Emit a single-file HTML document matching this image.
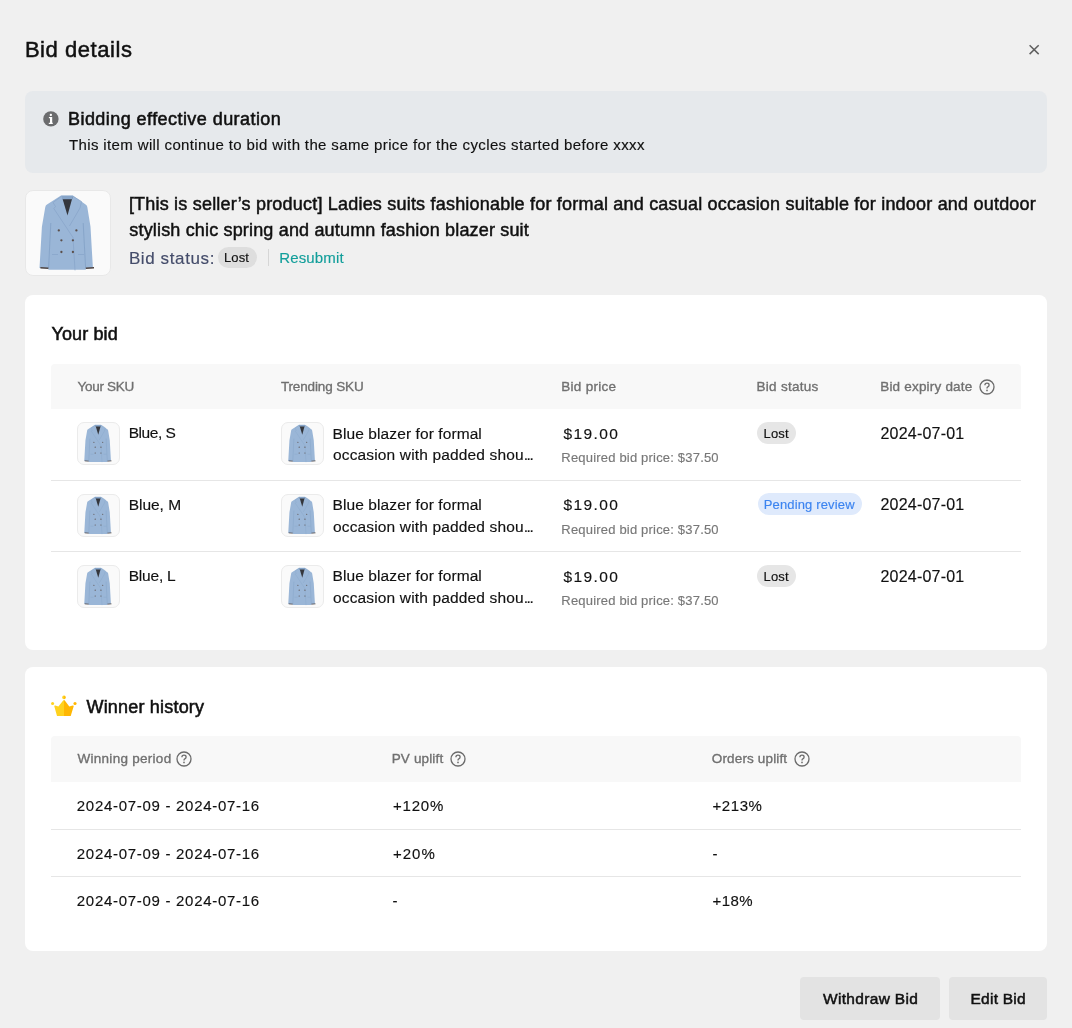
<!DOCTYPE html>
<html><head><meta charset="utf-8"><style>
html,body{margin:0;padding:0;width:1072px;height:1028px;overflow:hidden;background:#f0f0f0;font-family:"Liberation Sans", sans-serif;}
#root{position:relative;width:1072px;height:1028px;overflow:hidden;will-change:transform;}
.t{position:absolute;white-space:nowrap;}
.b{position:absolute;}
</style></head><body><div id="root">
<div class="t" style="left:24.90px;top:37.00px;font-size:22px;line-height:25px;color:#111111;letter-spacing:0.55px;-webkit-text-stroke:0.5px #111111;">Bid details</div>
<svg class="b" style="left:1026px;top:41px" width="16" height="17" viewBox="0 0 16 17"><path d="M3.6 4.2 L12.7 13.1 M12.7 4.2 L3.6 13.1" stroke="#606060" stroke-width="1.5" fill="none"/></svg>
<div class="b" style="left:25px;top:91px;width:1022px;height:82px;background:#e6e9ec;border-radius:8px"></div>
<svg class="b" style="left:43px;top:111px" width="16" height="16" viewBox="0 0 16 16"><circle cx="7.9" cy="7.9" r="7.7" fill="#6b6c6e"/><rect x="6.75" y="2.85" width="2.2" height="2.1" rx="0.8" fill="#fff"/><path d="M5.9 6 H9.2 V11.8 H9.8 V13.1 H5.8 V11.8 H7 V7.2 H5.9 Z" fill="#fff"/></svg>
<div class="t" style="left:68.00px;top:109.30px;font-size:18px;line-height:20px;color:#111111;letter-spacing:0.44px;-webkit-text-stroke:0.55px #111111;">Bidding effective duration</div>
<div class="t" style="left:69.00px;top:136.20px;font-size:15px;line-height:17px;color:#111111;letter-spacing:0.369px;-webkit-text-stroke:0.15px #111111;">This item will continue to bid with the same price for the cycles started before xxxx</div>
<svg width="0" height="0" style="position:absolute"><defs>
<symbol id="jk" viewBox="0 0 86 86">
<path d="M36 5.6 L47.8 5.6 L60.6 14.4 Q62 15.3 62.3 17 L65.5 36.7 L67.9 78 L60.9 78.4 L60.8 79.8 L23.4 79.8 L23.3 78.4 L14.5 78 L16.9 36.7 L20.3 17 Q20.6 15.3 22 14.4 Z" fill="#9ab6d7"/>
<path d="M25.8 33 L23.6 78 M58.2 33 L60.6 78" stroke="#85a3c7" stroke-width="0.9" fill="none"/>
<path d="M37 7 L47.6 7 L42.5 25.5 Z" fill="#34363c"/><path d="M36.4 5.8 L48.1 5.8 L47.4 9.2 L37.1 9.2 Z" fill="#86a4c8"/>
<path d="M36.4 6.4 L28 12.5 L30.5 16.5 L28.8 18.5 L48 47.5 M48.1 6.4 L56.5 11.5 L55 18 L44.5 36 M48 47.5 L50 80.4 M27 64.5 L33 64.5 M53 64.5 L59 64.5" stroke="#86a4c8" stroke-width="0.7" fill="none"/>
<path d="M15.4 77 L23.4 77.4 L23.4 79 L15.4 78.6 Z M60.8 77.4 L69 77 L69 78.6 L60.8 79 Z" fill="#4e4442"/>
<g fill="#5b4f4b"><circle cx="33.8" cy="40.4" r="1.15"/><circle cx="51.4" cy="40.4" r="1.15"/><circle cx="36.4" cy="50.3" r="1.15"/><circle cx="47.9" cy="50.3" r="1.15"/><circle cx="36.4" cy="62" r="1.15"/><circle cx="47.9" cy="62" r="1.15"/></g>
</symbol>
<symbol id="qm" viewBox="0 0 16 16"><circle cx="8" cy="8" r="7" fill="none" stroke="#6b6b6b" stroke-width="1.3"/><path d="M5.9 6.2 Q5.9 4.2 8 4.2 Q10.1 4.2 10.1 6 Q10.1 7.2 8.8 7.9 Q8 8.3 8 9.4" fill="none" stroke="#6b6b6b" stroke-width="1.3"/><circle cx="8" cy="11.4" r="0.85" fill="#6b6b6b"/></symbol>
</defs></svg>
<div class="b" style="left:25px;top:190px;width:86px;height:86px;background:#fafafa;border:1px solid #e8e8e8;border-radius:8px;box-sizing:border-box"></div>
<svg class="b" style="left:25px;top:190px" width="86" height="86"><use href="#jk"/></svg>
<div class="t" style="left:128.90px;top:194.00px;font-size:18px;line-height:20px;color:#111111;letter-spacing:0.204px;-webkit-text-stroke:0.5px #111111;">[This is seller’s product] Ladies suits fashionable for formal and casual occasion suitable for indoor and outdoor</div>
<div class="t" style="left:129.30px;top:219.90px;font-size:18px;line-height:20px;color:#111111;letter-spacing:0.169px;-webkit-text-stroke:0.5px #111111;">stylish chic spring and autumn fashion blazer suit</div>
<div class="t" style="left:128.90px;top:248.80px;font-size:17px;line-height:19px;color:#444c6a;letter-spacing:0.61px;-webkit-text-stroke:0.15px #444c6a;">Bid status:</div>
<div class="b" style="left:218px;top:247px;width:39px;height:21px;background:#dedede;border-radius:11px"></div>
<div class="t" style="left:223.90px;top:250.20px;font-size:13px;line-height:15px;color:#111111;letter-spacing:0.167px;-webkit-text-stroke:0.15px #111111;">Lost</div>
<div class="b" style="left:267.5px;top:249px;width:1px;height:17px;background:#d6d6d6"></div>
<div class="t" style="left:279.20px;top:248.90px;font-size:15px;line-height:17px;color:#129e9a;letter-spacing:0.157px;-webkit-text-stroke:0.15px #129e9a;">Resubmit</div>
<div class="b" style="left:25px;top:294.5px;width:1022px;height:355.5px;background:#fff;border-radius:8px"></div>
<div class="t" style="left:51.50px;top:324.00px;font-size:18px;line-height:20px;color:#111111;letter-spacing:0.114px;-webkit-text-stroke:0.55px #111111;">Your bid</div>
<div class="b" style="left:51px;top:364px;width:970px;height:45px;background:#f8f8f8;border-radius:4px 4px 0 0"></div>
<div class="t" style="left:77.50px;top:379.20px;font-size:13.5px;line-height:15px;color:#707070;letter-spacing:-0.3px;-webkit-text-stroke:0.35px #707070;">Your SKU</div>
<div class="t" style="left:280.90px;top:379.20px;font-size:13.5px;line-height:15px;color:#707070;letter-spacing:-0.136px;-webkit-text-stroke:0.35px #707070;">Trending SKU</div>
<div class="t" style="left:561.20px;top:379.20px;font-size:13.5px;line-height:15px;color:#707070;letter-spacing:0.3px;-webkit-text-stroke:0.35px #707070;">Bid price</div>
<div class="t" style="left:756.60px;top:379.20px;font-size:13.5px;line-height:15px;color:#707070;letter-spacing:0.256px;-webkit-text-stroke:0.35px #707070;">Bid status</div>
<div class="t" style="left:880.20px;top:379.20px;font-size:13.5px;line-height:15px;color:#707070;letter-spacing:0.2px;-webkit-text-stroke:0.35px #707070;">Bid expiry date</div>
<svg class="b" style="left:979px;top:378.6px" width="16" height="16"><use href="#qm"/></svg>
<div class="b" style="left:77px;top:422.3px;width:43px;height:43px;background:#fafafa;border:1px solid #ebebeb;border-radius:7px;box-sizing:border-box"></div>
<svg class="b" style="left:77px;top:422.3px" width="43" height="43"><use href="#jk"/></svg>
<div class="t" style="left:128.70px;top:424.30px;font-size:15.5px;line-height:17px;color:#111111;letter-spacing:-0.45px;-webkit-text-stroke:0.15px #111111;">Blue, S</div>
<div class="b" style="left:281px;top:422.3px;width:43px;height:43px;background:#fafafa;border:1px solid #ebebeb;border-radius:7px;box-sizing:border-box"></div>
<svg class="b" style="left:281px;top:422.3px" width="43" height="43"><use href="#jk"/></svg>
<div class="t" style="left:332.60px;top:424.50px;font-size:15.5px;line-height:17px;color:#111111;letter-spacing:0.09px;-webkit-text-stroke:0.15px #111111;">Blue blazer for formal</div>
<div class="t" style="left:333.00px;top:446.10px;font-size:15.5px;line-height:17px;color:#111111;letter-spacing:0.148px;-webkit-text-stroke:0.15px #111111;">occasion with padded shou<span style="letter-spacing:-1.4px">...</span></div>
<div class="t" style="left:563.60px;top:424.70px;font-size:15.5px;line-height:17px;color:#111111;letter-spacing:1.36px;-webkit-text-stroke:0.15px #111111;">$19.00</div>
<div class="t" style="left:561.30px;top:450.30px;font-size:13px;line-height:15px;color:#787878;letter-spacing:0.192px;-webkit-text-stroke:0.15px #787878;">Required bid price: $37.50</div>
<div class="b" style="left:757px;top:422.0px;width:39px;height:22px;background:#e6e6e6;border-radius:11px"></div>
<div class="t" style="left:763.60px;top:425.90px;font-size:13px;line-height:15px;color:#111111;letter-spacing:0.133px;-webkit-text-stroke:0.15px #111111;">Lost</div>
<div class="t" style="left:880.50px;top:424.80px;font-size:16px;line-height:17px;color:#111111;letter-spacing:0.211px;-webkit-text-stroke:0.15px #111111;">2024-07-01</div>
<div class="b" style="left:51px;top:480px;width:970px;height:1px;background:#e6e6e6"></div>
<div class="b" style="left:77px;top:493.7px;width:43px;height:43px;background:#fafafa;border:1px solid #ebebeb;border-radius:7px;box-sizing:border-box"></div>
<svg class="b" style="left:77px;top:493.7px" width="43" height="43"><use href="#jk"/></svg>
<div class="t" style="left:128.70px;top:495.70px;font-size:15.5px;line-height:17px;color:#111111;letter-spacing:-0.033px;-webkit-text-stroke:0.15px #111111;">Blue, M</div>
<div class="b" style="left:281px;top:493.7px;width:43px;height:43px;background:#fafafa;border:1px solid #ebebeb;border-radius:7px;box-sizing:border-box"></div>
<svg class="b" style="left:281px;top:493.7px" width="43" height="43"><use href="#jk"/></svg>
<div class="t" style="left:332.60px;top:495.90px;font-size:15.5px;line-height:17px;color:#111111;letter-spacing:0.09px;-webkit-text-stroke:0.15px #111111;">Blue blazer for formal</div>
<div class="t" style="left:333.00px;top:517.50px;font-size:15.5px;line-height:17px;color:#111111;letter-spacing:0.148px;-webkit-text-stroke:0.15px #111111;">occasion with padded shou<span style="letter-spacing:-1.4px">...</span></div>
<div class="t" style="left:563.60px;top:496.10px;font-size:15.5px;line-height:17px;color:#111111;letter-spacing:1.36px;-webkit-text-stroke:0.15px #111111;">$19.00</div>
<div class="t" style="left:561.30px;top:521.70px;font-size:13px;line-height:15px;color:#787878;letter-spacing:0.192px;-webkit-text-stroke:0.15px #787878;">Required bid price: $37.50</div>
<div class="b" style="left:757.5px;top:493.4px;width:104.5px;height:21.5px;background:#dfeafc;border-radius:11px"></div>
<div class="t" style="left:763.70px;top:497.00px;font-size:13px;line-height:15px;color:#3c84f0;letter-spacing:0.154px;-webkit-text-stroke:0.15px #3c84f0;">Pending review</div>
<div class="t" style="left:880.50px;top:496.20px;font-size:16px;line-height:17px;color:#111111;letter-spacing:0.211px;-webkit-text-stroke:0.15px #111111;">2024-07-01</div>
<div class="b" style="left:51px;top:551px;width:970px;height:1px;background:#e6e6e6"></div>
<div class="b" style="left:77px;top:565.1px;width:43px;height:43px;background:#fafafa;border:1px solid #ebebeb;border-radius:7px;box-sizing:border-box"></div>
<svg class="b" style="left:77px;top:565.1px" width="43" height="43"><use href="#jk"/></svg>
<div class="t" style="left:128.70px;top:567.10px;font-size:15.5px;line-height:17px;color:#111111;letter-spacing:-0.2px;-webkit-text-stroke:0.15px #111111;">Blue, L</div>
<div class="b" style="left:281px;top:565.1px;width:43px;height:43px;background:#fafafa;border:1px solid #ebebeb;border-radius:7px;box-sizing:border-box"></div>
<svg class="b" style="left:281px;top:565.1px" width="43" height="43"><use href="#jk"/></svg>
<div class="t" style="left:332.60px;top:567.30px;font-size:15.5px;line-height:17px;color:#111111;letter-spacing:0.09px;-webkit-text-stroke:0.15px #111111;">Blue blazer for formal</div>
<div class="t" style="left:333.00px;top:588.90px;font-size:15.5px;line-height:17px;color:#111111;letter-spacing:0.148px;-webkit-text-stroke:0.15px #111111;">occasion with padded shou<span style="letter-spacing:-1.4px">...</span></div>
<div class="t" style="left:563.60px;top:567.50px;font-size:15.5px;line-height:17px;color:#111111;letter-spacing:1.36px;-webkit-text-stroke:0.15px #111111;">$19.00</div>
<div class="t" style="left:561.30px;top:593.10px;font-size:13px;line-height:15px;color:#787878;letter-spacing:0.192px;-webkit-text-stroke:0.15px #787878;">Required bid price: $37.50</div>
<div class="b" style="left:757px;top:564.8px;width:39px;height:22px;background:#e6e6e6;border-radius:11px"></div>
<div class="t" style="left:763.60px;top:568.70px;font-size:13px;line-height:15px;color:#111111;letter-spacing:0.133px;-webkit-text-stroke:0.15px #111111;">Lost</div>
<div class="t" style="left:880.50px;top:567.60px;font-size:16px;line-height:17px;color:#111111;letter-spacing:0.211px;-webkit-text-stroke:0.15px #111111;">2024-07-01</div>
<div class="b" style="left:25px;top:667px;width:1022px;height:283.5px;background:#fff;border-radius:8px"></div>
<svg class="b" style="left:50px;top:694px" width="28" height="24" viewBox="0 0 28 24"><path d="M4.3 12.2 Q4.3 11.3 5.3 11.5 L8.4 12.6 L13.2 6.6 Q13.9 5.9 14 6.2 L14 21.9 L7 21.9 Z" fill="#ffd21f"/><path d="M23.7 12.2 Q23.7 11.3 22.7 11.5 L19.3 12.6 L14.8 6.6 Q14.1 5.9 14 6.2 L14 21.9 L20.7 21.9 Z" fill="#ffb703"/><circle cx="2.6" cy="9.5" r="1.55" fill="#ffd21f"/><path d="M14 1.6 A1.8 1.8 0 0 0 14 5.2 Z" fill="#ffd21f"/><path d="M14 1.6 A1.8 1.8 0 0 1 14 5.2 Z" fill="#ffbe0a"/><circle cx="25" cy="9.5" r="1.55" fill="#ffb703"/></svg>
<div class="t" style="left:86.50px;top:696.90px;font-size:18px;line-height:20px;color:#111111;letter-spacing:0.192px;-webkit-text-stroke:0.55px #111111;">Winner history</div>
<div class="b" style="left:51px;top:736px;width:970px;height:46px;background:#f8f8f8;border-radius:4px 4px 0 0"></div>
<div class="t" style="left:77.50px;top:751.10px;font-size:13.5px;line-height:15px;color:#707070;letter-spacing:0.277px;-webkit-text-stroke:0.35px #707070;">Winning period</div>
<div class="t" style="left:391.70px;top:751.20px;font-size:13.5px;line-height:15px;color:#707070;letter-spacing:0.15px;-webkit-text-stroke:0.35px #707070;">PV uplift</div>
<div class="t" style="left:711.80px;top:751.20px;font-size:13.5px;line-height:15px;color:#707070;letter-spacing:0.15px;-webkit-text-stroke:0.35px #707070;">Orders uplift</div>
<svg class="b" style="left:176px;top:751.3px" width="16" height="16"><use href="#qm"/></svg>
<svg class="b" style="left:450px;top:751.3px" width="16" height="16"><use href="#qm"/></svg>
<svg class="b" style="left:794px;top:751.3px" width="16" height="16"><use href="#qm"/></svg>
<div class="b" style="left:51px;top:829px;width:970px;height:1px;background:#e6e6e6"></div>
<div class="b" style="left:51px;top:876px;width:970px;height:1px;background:#e6e6e6"></div>
<div class="t" style="left:76.80px;top:796.80px;font-size:15px;line-height:17px;color:#111111;letter-spacing:0.709px;-webkit-text-stroke:0.15px #111111;">2024-07-09 - 2024-07-16</div>
<div class="t" style="left:76.80px;top:844.60px;font-size:15px;line-height:17px;color:#111111;letter-spacing:0.709px;-webkit-text-stroke:0.15px #111111;">2024-07-09 - 2024-07-16</div>
<div class="t" style="left:76.80px;top:892.30px;font-size:15px;line-height:17px;color:#111111;letter-spacing:0.709px;-webkit-text-stroke:0.15px #111111;">2024-07-09 - 2024-07-16</div>
<div class="t" style="left:393.00px;top:796.80px;font-size:15px;line-height:17px;color:#111111;letter-spacing:0.775px;-webkit-text-stroke:0.15px #111111;">+120%</div>
<div class="t" style="left:712.40px;top:796.80px;font-size:15px;line-height:17px;color:#111111;letter-spacing:0.6px;-webkit-text-stroke:0.15px #111111;">+213%</div>
<div class="t" style="left:393.00px;top:844.60px;font-size:15px;line-height:17px;color:#111111;letter-spacing:1.0px;-webkit-text-stroke:0.15px #111111;">+20%</div>
<div class="t" style="left:712.40px;top:844.60px;font-size:15px;line-height:17px;color:#111111;letter-spacing:-0.6px;-webkit-text-stroke:0.15px #111111;">-</div>
<div class="t" style="left:392.60px;top:892.30px;font-size:15px;line-height:17px;color:#111111;letter-spacing:-0.6px;-webkit-text-stroke:0.15px #111111;">-</div>
<div class="t" style="left:712.40px;top:892.40px;font-size:15px;line-height:17px;color:#111111;letter-spacing:0.5px;-webkit-text-stroke:0.15px #111111;">+18%</div>
<div class="b" style="left:800px;top:977px;width:140px;height:43px;background:#e3e3e3;border-radius:4px"></div>
<div class="t" style="left:823.00px;top:989.80px;font-size:15.5px;line-height:17px;color:#111111;letter-spacing:0.327px;-webkit-text-stroke:0.5px #111111;">Withdraw Bid</div>
<div class="b" style="left:949px;top:977px;width:98px;height:43px;background:#e3e3e3;border-radius:4px"></div>
<div class="t" style="left:970.50px;top:989.80px;font-size:15.5px;line-height:17px;color:#111111;letter-spacing:0.243px;-webkit-text-stroke:0.5px #111111;">Edit Bid</div>
</div></body></html>
